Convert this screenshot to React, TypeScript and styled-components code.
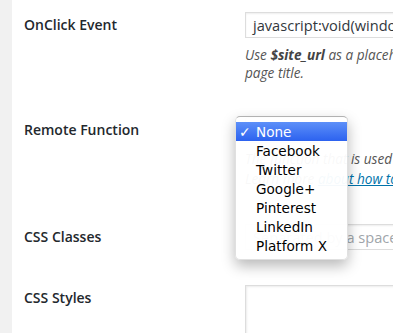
import React from 'react';
import styled, { createGlobalStyle } from 'styled-components';

const GlobalStyle = createGlobalStyle`
  html, body {
    margin: 0;
    padding: 0;
    background: #f1f1f1;
    overflow: hidden;
  }
  body {
    font-family: 'Open Sans', 'Liberation Sans', sans-serif;
    color: #444;
  }
`;

const Page = styled.div`
  display: flex;
  width: 393px;
  height: 333px;
  overflow: hidden;
`;

const Sidebar = styled.div`
  flex: 0 0 12px;
  background: #f1f1f1;
`;

const Content = styled.div`
  flex: 0 0 auto;
  background: #fff;
  padding: 12px 0 0 12px;
`;

const Form = styled.div`
  display: grid;
  grid-template-columns: 221px 520px;
  row-gap: 35px;
`;

const Label = styled.div`
  font-size: 14px;
  font-weight: 600;
  line-height: 26px;
  color: #23282d;
`;

const Field = styled.div`
  position: relative;
`;

const TextInput = styled.div<{ placeholder?: boolean }>`
  box-sizing: border-box;
  height: 26px;
  width: 420px;
  border: 1px solid #ddd;
  box-shadow: inset 0 1px 2px rgba(0, 0, 0, 0.07);
  padding: 0 7px;
  font-size: 14.6px;
  line-height: 24px;
  color: ${({ placeholder }) => (placeholder ? '#a0a5aa' : '#32373c')};
  white-space: nowrap;
  overflow: hidden;
`;

const TextArea = styled.div`
  box-sizing: border-box;
  height: 90px;
  width: 420px;
  border: 1px solid #ddd;
  box-shadow: inset 1px 1px 2px rgba(0, 0, 0, 0.08);
`;

const Description = styled.p<{ lh: number }>`
  margin: ${({ lh }) => (lh > 18 ? 6 : 8)}px 0 0;
  font-size: 13.6px;
  font-style: italic;
  line-height: ${({ lh }) => lh}px;
  color: #555;
  white-space: nowrap;

  strong {
    font-weight: 700;
    color: #444;
  }
  a {
    color: #0073aa;
    text-decoration: underline;
  }
`;

const SelectBox = styled.div`
  box-sizing: border-box;
  height: 26px;
  width: 103px;
  border: 1px solid #ccc;
  border-radius: 3px;
  background: #fff;
`;

const Menu = styled.ul`
  position: absolute;
  left: -10px;
  top: -1px;
  z-index: 5;
  box-sizing: border-box;
  width: 113px;
  margin: 0;
  padding: 5px 0 4px;
  list-style: none;
  background: rgba(255, 255, 255, 0.96);
  border: 1px solid rgba(0, 0, 0, 0.12);
  border-top-color: rgba(0, 0, 0, 0.3);
  border-radius: 5px;
  box-shadow: 0 6px 14px rgba(0, 0, 0, 0.28);
  font-family: 'DejaVu Sans', 'Liberation Sans', sans-serif;
  font-size: 13.6px;
`;

const MenuItem = styled.li<{ selected?: boolean }>`
  display: flex;
  align-items: center;
  height: 19px;
  padding-left: 3px;
  color: ${({ selected }) => (selected ? '#fff' : '#000')};
  background: ${({ selected }) =>
    selected ? 'linear-gradient(#5d90f9, #2c62ef)' : 'transparent'};

  span {
    width: 17px;
    font-size: 14px;
    font-weight: 700;
  }
`;

const options = [
  'None',
  'Facebook',
  'Twitter',
  'Google+',
  'Pinterest',
  'LinkedIn',
  'Platform X',
];

export default function App() {
  return (
    <Page>
      <GlobalStyle />
      <Sidebar />
      <Content>
        <Form>
          <Label>OnClick Event</Label>
          <Field>
            <TextInput>
              javascript:void(window.open('https://example.com/share?u=$site_url'))
            </TextInput>
            <Description lh={18}>
              Use <strong>$site_url</strong> as a placeholder for the URL and $title
              for the
              <br />
              page title.
            </Description>
          </Field>

          <Label>Remote Function</Label>
          <Field>
            <SelectBox />
            <Menu>
              {options.map((opt, i) => (
                <MenuItem key={opt} selected={i === 0}>
                  <span>{i === 0 ? '✓' : ''}</span>
                  {opt}
                </MenuItem>
              ))}
            </Menu>
            <Description lh={20}>
              The function that is used for the remote share count.
              <br />
              Learn more <a href='#'>about how to add your own</a>.
            </Description>
          </Field>

          <Label>CSS Classes</Label>
          <Field>
            <TextInput placeholder>Separated by a space</TextInput>
          </Field>

          <Label>CSS Styles</Label>
          <Field>
            <TextArea />
          </Field>
        </Form>
      </Content>
    </Page>
  );
}
